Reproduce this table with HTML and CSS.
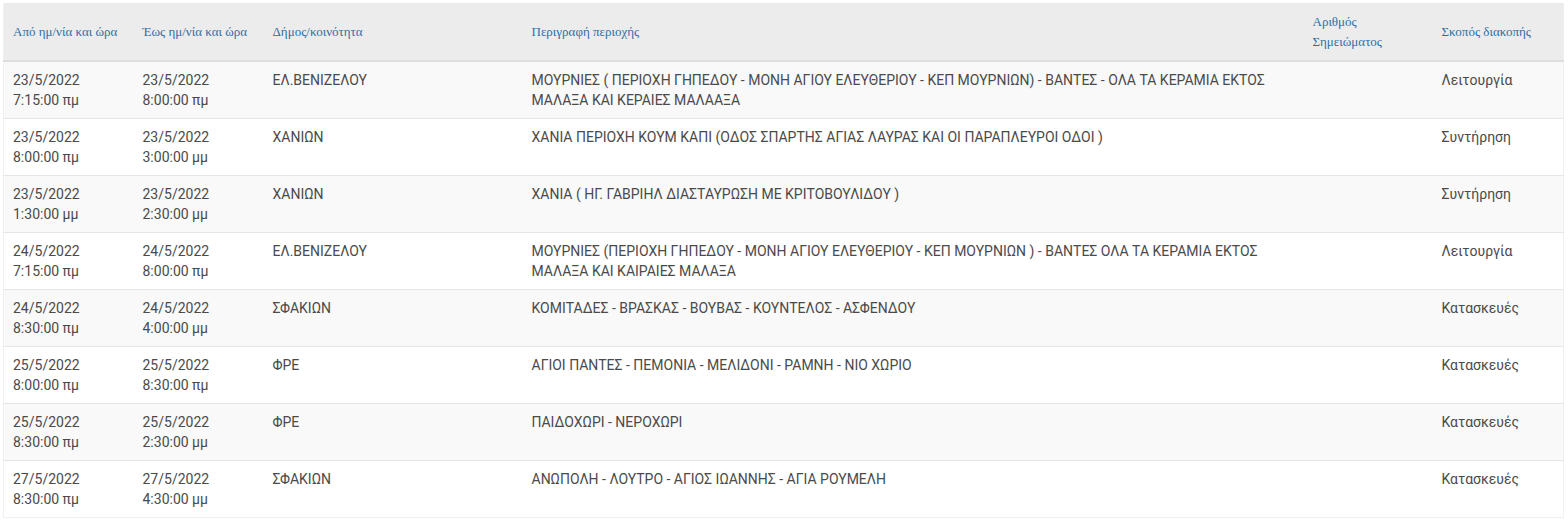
FILE: index.html
```html
<!DOCTYPE html>
<html lang="el">
<head>
<meta charset="utf-8">
<title>Διακοπές</title>
<link rel="stylesheet" href="styles.css">
</head>
<body>
<table class="outages">
  <colgroup>
    <col class="c1"><col class="c2"><col class="c3"><col class="c4"><col class="c5"><col class="c6">
  </colgroup>
  <thead>
    <tr>
      <th>Από ημ/νία και ώρα</th>
      <th>Έως ημ/νία και ώρα</th>
      <th>Δήμος/κοινότητα</th>
      <th>Περιγραφή περιοχής</th>
      <th>Αριθμός Σημειώματος</th>
      <th>Σκοπός διακοπής</th>
    </tr>
  </thead>
  <tbody>
    <tr>
      <td>23/5/2022<br>7:15:00 πμ</td>
      <td>23/5/2022<br>8:00:00 πμ</td>
      <td>ΕΛ.ΒΕΝΙΖΕΛΟΥ</td>
      <td>ΜΟΥΡΝΙΕΣ ( ΠΕΡΙΟΧΗ ΓΗΠΕΔΟΥ - ΜΟΝΗ ΑΓΙΟΥ ΕΛΕΥΘΕΡΙΟΥ - ΚΕΠ ΜΟΥΡΝΙΩΝ) - ΒΑΝΤΕΣ - ΟΛΑ ΤΑ ΚΕΡΑΜΙΑ ΕΚΤΟΣ ΜΑΛΑΞΑ ΚΑΙ ΚΕΡΑΙΕΣ ΜΑΛΑΑΞΑ</td>
      <td></td>
      <td>Λειτουργία</td>
    </tr>
    <tr>
      <td>23/5/2022<br>8:00:00 πμ</td>
      <td>23/5/2022<br>3:00:00 μμ</td>
      <td>ΧΑΝΙΩΝ</td>
      <td>ΧΑΝΙΑ ΠΕΡΙΟΧΗ ΚΟΥΜ ΚΑΠΙ (ΟΔΟΣ ΣΠΑΡΤΗΣ ΑΓΙΑΣ ΛΑΥΡΑΣ ΚΑΙ ΟΙ ΠΑΡΑΠΛΕΥΡΟΙ ΟΔΟΙ )</td>
      <td></td>
      <td>Συντήρηση</td>
    </tr>
    <tr>
      <td>23/5/2022<br>1:30:00 μμ</td>
      <td>23/5/2022<br>2:30:00 μμ</td>
      <td>ΧΑΝΙΩΝ</td>
      <td>ΧΑΝΙΑ ( ΗΓ. ΓΑΒΡΙΗΛ ΔΙΑΣΤΑΥΡΩΣΗ ΜΕ ΚΡΙΤΟΒΟΥΛΙΔΟΥ )</td>
      <td></td>
      <td>Συντήρηση</td>
    </tr>
    <tr>
      <td>24/5/2022<br>7:15:00 πμ</td>
      <td>24/5/2022<br>8:00:00 πμ</td>
      <td>ΕΛ.ΒΕΝΙΖΕΛΟΥ</td>
      <td>ΜΟΥΡΝΙΕΣ (ΠΕΡΙΟΧΗ ΓΗΠΕΔΟΥ - ΜΟΝΗ ΑΓΙΟΥ ΕΛΕΥΘΕΡΙΟΥ - ΚΕΠ ΜΟΥΡΝΙΩΝ ) - ΒΑΝΤΕΣ ΟΛΑ ΤΑ ΚΕΡΑΜΙΑ ΕΚΤΟΣ ΜΑΛΑΞΑ ΚΑΙ ΚΑΙΡΑΙΕΣ ΜΑΛΑΞΑ</td>
      <td></td>
      <td>Λειτουργία</td>
    </tr>
    <tr>
      <td>24/5/2022<br>8:30:00 πμ</td>
      <td>24/5/2022<br>4:00:00 μμ</td>
      <td>ΣΦΑΚΙΩΝ</td>
      <td>ΚΟΜΙΤΑΔΕΣ - ΒΡΑΣΚΑΣ - ΒΟΥΒΑΣ - ΚΟΥΝΤΕΛΟΣ - ΑΣΦΕΝΔΟΥ</td>
      <td></td>
      <td>Κατασκευές</td>
    </tr>
    <tr>
      <td>25/5/2022<br>8:00:00 πμ</td>
      <td>25/5/2022<br>8:30:00 πμ</td>
      <td>ΦΡΕ</td>
      <td>ΑΓΙΟΙ ΠΑΝΤΕΣ - ΠΕΜΟΝΙΑ - ΜΕΛΙΔΟΝΙ - ΡΑΜΝΗ - ΝΙΟ ΧΩΡΙΟ</td>
      <td></td>
      <td>Κατασκευές</td>
    </tr>
    <tr>
      <td>25/5/2022<br>8:30:00 πμ</td>
      <td>25/5/2022<br>2:30:00 μμ</td>
      <td>ΦΡΕ</td>
      <td>ΠΑΙΔΟΧΩΡΙ - ΝΕΡΟΧΩΡΙ</td>
      <td></td>
      <td>Κατασκευές</td>
    </tr>
    <tr>
      <td>27/5/2022<br>8:30:00 πμ</td>
      <td>27/5/2022<br>4:30:00 μμ</td>
      <td>ΣΦΑΚΙΩΝ</td>
      <td>ΑΝΩΠΟΛΗ - ΛΟΥΤΡΟ - ΑΓΙΟΣ ΙΩΑΝΝΗΣ - ΑΓΙΑ ΡΟΥΜΕΛΗ</td>
      <td></td>
      <td>Κατασκευές</td>
    </tr>
  </tbody>
</table>
</body>
</html>
```

FILE: styles.css
```css
html, body {
  margin: 0;
  padding: 0;
  background: #ffffff;
}
body {
  padding: 3px 5px 0 3px;
}
.outages {
  width: 1560px;
  border-collapse: collapse;
  table-layout: fixed;
  border: 1px solid #f0f0f0;
  border-top: 0;
  font-family: Roboto, "Liberation Sans", sans-serif;
  font-size: 14px;
  line-height: 20px;
  color: #4a4a4a;
}
.c1 { width: 130px; }
.c2 { width: 130px; }
.c3 { width: 259px; }
.c4 { width: 781px; }
.c5 { width: 129px; }
.c6 { width: 131px; }
.outages th {
  background: #ececec;
  font-family: "Liberation Serif", "DejaVu Serif", serif;
  font-weight: normal;
  font-size: 13px;
  line-height: 20px;
  color: #2f6fa4;
  text-align: left;
  vertical-align: middle;
  padding: 8px 9px;
  height: 41px;
  border-bottom: 2px solid #dddddd;
}
.outages td {
  vertical-align: top;
  padding: 8px 9px;
  border-top: 1px solid #e6e6e6;
}
.outages tbody tr:nth-child(odd) td {
  background: #f9f9f9;
}
.outages tbody tr:nth-child(even) td {
  background: #ffffff;
}
```
